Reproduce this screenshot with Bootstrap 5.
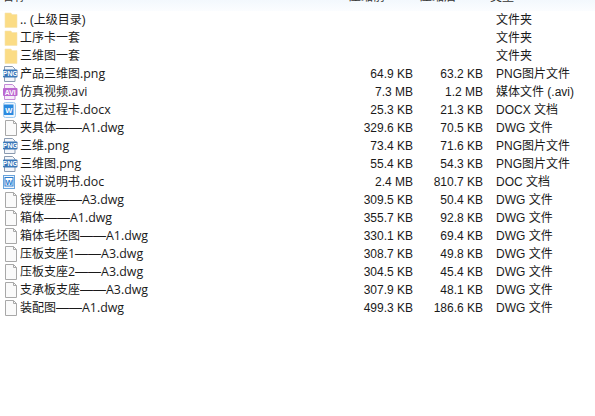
<!DOCTYPE html>
<html lang="zh"><head><meta charset="utf-8"><title>Files</title>
<link href="https://cdn.jsdelivr.net/npm/bootstrap@5.3.0/dist/css/bootstrap.min.css" rel="stylesheet">
<style>
html,body{height:416px;overflow:hidden;background:#fff}
body{font-family:"Liberation Sans","Noto Sans CJK SC",sans-serif;font-size:12px;color:#1a1a1a;line-height:18px}
.fl-head{height:11px;overflow:hidden;background:linear-gradient(#f3f8fd,#fbfdff)}
.fl-head>div{margin-top:-12px;color:#333}
.fl-row,.fl-head>div{display:flex;height:18px;white-space:nowrap}
.c-ico{width:20px;flex:none;display:flex;align-items:center;justify-content:center;padding-left:2px}
.c-name{width:310px;flex:none}
.lat{font-family:"Open Sans","Noto Sans CJK SC",sans-serif;font-size:12.4px}
.dsh{font-size:13px}
.c-a{width:83px;flex:none;text-align:right}
.c-b{width:70px;flex:none;text-align:right}
.c-t{padding-left:13px}
.c-hn{padding-left:2px;width:349px;flex:none}
.c-h1{width:71px;flex:none}
.c-h2{width:70px;flex:none}
</style></head><body>
<svg width="0" height="0" class="d-block position-absolute"><defs>
<symbol id="i-fold" viewBox="0 0 16 16"><path d="M2 1h6l1 1.500h5v13H2z" fill="#fbdc85" stroke="#f5e2ae" stroke-width=".6"/></symbol>
<symbol id="i-file" viewBox="0 0 16 16"><path d="M2.500 .5h8l3 3v12h-11z" fill="#fafafa" stroke="#a8a8a8"/><path d="M10.500 .5v3h3" fill="none" stroke="#a8a8a8"/></symbol>
<symbol id="i-png" viewBox="0 0 16 16"><path d="M1.500 .5h8l2.500 2.500v12.500h-10.500z" fill="#f4f6fa" stroke="#8a9ab0"/><rect x="0" y="3.500" width="14.500" height="8" rx="1" fill="#3b78b8"/><text x="7.200" y="10.300" text-anchor="middle" font-size="6.800" font-weight="700" fill="#fff" font-family="Liberation Sans">PNG</text></symbol>
<symbol id="i-avi" viewBox="0 0 16 16"><path d="M1.500 .5h8l2.500 2.500v12.500h-10.500z" fill="#f6eef9" stroke="#c48ad8"/><rect x="0" y="4" width="14.500" height="8" rx="1" fill="#bb68d0"/><text x="7.200" y="10.800" text-anchor="middle" font-size="6.800" font-weight="700" fill="#fff" font-family="Liberation Sans">AVI</text></symbol>
<symbol id="i-docx" viewBox="0 0 16 16"><rect x=".5" y=".5" width="12" height="15" rx="2" fill="#eef6fd" stroke="#9cc8ee"/><rect x="1" y="2.500" width="9.500" height="10.500" fill="#2a8ae0"/><text x="5.700" y="10.800" text-anchor="middle" font-size="7.500" font-weight="700" fill="#fff" font-family="Liberation Sans">W</text></symbol>
<symbol id="i-doc" viewBox="0 0 16 16"><rect x=".5" y="1.500" width="11" height="13" fill="#f2f7fd" stroke="#6aa4dc"/><rect x="2" y="3.500" width="8" height="8.500" fill="#fff" stroke="#2a7dd0"/><text x="6" y="10.800" text-anchor="middle" font-size="7.500" font-weight="700" fill="#2a7dd0" font-family="Liberation Sans">W</text></symbol>
</defs></svg>
<div class="fl-head"><div><span class="c-hn">名称</span><span class="c-h1">压缩前</span><span class="c-h2">压缩后</span><span>类型</span></div></div>
<div id="fl"></div>
<script>
var rows=[["fold",".. (上级目录)","","","文件夹"],["fold","工序卡一套","","","文件夹"],["fold","三维图一套","","","文件夹"],
["png","产品三维图.png","64.9 KB","63.2 KB","PNG图片文件"],["avi","仿真视频.avi","7.3 MB","1.2 MB","媒体文件 (.avi)"],["docx","工艺过程卡.docx","25.3 KB","21.3 KB","DOCX 文档"],
["file","夹具体——A1.dwg","329.6 KB","70.5 KB","DWG 文件"],["png","三维.png","73.4 KB","71.6 KB","PNG图片文件"],["png","三维图.png","55.4 KB","54.3 KB","PNG图片文件"],
["doc","设计说明书.doc","2.4 MB","810.7 KB","DOC 文档"],["file","镗模座——A3.dwg","309.5 KB","50.4 KB","DWG 文件"],["file","箱体——A1.dwg","355.7 KB","92.8 KB","DWG 文件"],
["file","箱体毛坯图——A1.dwg","330.1 KB","69.4 KB","DWG 文件"],["file","压板支座1——A3.dwg","308.7 KB","49.8 KB","DWG 文件"],["file","压板支座2——A3.dwg","304.5 KB","45.4 KB","DWG 文件"],
["file","支承板支座——A3.dwg","307.9 KB","48.1 KB","DWG 文件"],["file","装配图——A1.dwg","499.3 KB","186.6 KB","DWG 文件"]];
function nm(s){return s.replace(/——/,'<span class="dsh">——</span>').replace(/[A-Za-z0-9.]+(?![^<]*>)/g,function(m){return '<span class="lat">'+m+'</span>'})}
document.getElementById('fl').innerHTML=rows.map(function(r){return '<div class="fl-row"><span class="c-ico"><svg width="16" height="16"><use href="#i-'+r[0]+'"/></svg></span><span class="c-name">'+nm(r[1])+'</span><span class="c-a">'+r[2]+'</span><span class="c-b">'+r[3]+'</span><span class="c-t">'+r[4]+'</span></div>'}).join('');
</script>
<script src="https://cdn.jsdelivr.net/npm/bootstrap@5.3.0/dist/js/bootstrap.bundle.min.js"></script>
</body></html>
